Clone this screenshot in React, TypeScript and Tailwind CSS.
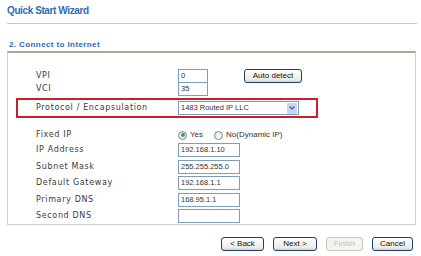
import { ChevronDown } from "lucide-react";

const label = "text-[8px] text-[#3a3a3a] tracking-[0.65px] [font-family:'DejaVu_Sans',sans-serif]";
const inputCls =
  "h-[14px] border border-[#7f9db9] bg-white px-[2px] text-[7.5px] leading-[12px] text-[#333] [font-family:'Liberation_Sans',Arial,sans-serif]";
const btnCls =
  "h-[14px] rounded-[3px] border border-[#1f3f6e] bg-[linear-gradient(#ffffff,#ecebe5_80%,#d6d0c5)] text-[8px] leading-[12px] text-[#111] [font-family:'Liberation_Sans',Arial,sans-serif]";

function Field({ value, w = "w-[62px]" }: { value: string; w?: string }) {
  return <div className={`${inputCls} ${w}`}>{value}</div>;
}

function Radio({ checked }: { checked?: boolean }) {
  return (
    <span className="inline-flex h-[9px] w-[9px] items-center justify-center rounded-full border border-[#6d8aa8] bg-[radial-gradient(circle_at_60%_60%,#ffffff,#dcdcd6)]">
      {checked && <span className="h-[4px] w-[4px] rounded-full bg-[#3aa63a]" />}
    </span>
  );
}

function Row({ name, children, cls = "" }: { name: string; children: React.ReactNode; cls?: string }) {
  return (
    <div className={`grid grid-cols-[142px_1fr] items-center ${cls}`}>
      <span className={label}>{name}</span>
      <div className="flex items-center">{children}</div>
    </div>
  );
}

export default function App() {
  return (
    <div className="h-[256px] w-[421px] overflow-hidden bg-white [font-family:'Liberation_Sans',Arial,sans-serif]">
      <div className="px-[7px] pt-[5px]">
        <h1 className="text-[10px] font-bold leading-[12px] tracking-[-0.4px] text-[#2f6cb3]">Quick Start Wizard</h1>
        <div className="mt-[6px] h-px w-[410px] bg-[#c9c9c0]" />
        <h2 className="ml-[2px] mt-[16px] text-[8px] font-bold leading-[10px] tracking-[0.4px] text-[#2a6db3]">
          2. Connect to Internet
        </h2>

        <div className="mt-px h-[174px] w-[409px] border border-[#d0d0c8] border-t-2 border-t-[#a9a99a] pl-[28px] pt-[16px]">
          <Row name="VPI" cls="h-[13px]">
            <Field value="0" w="w-[30px] h-[13px]" />
            <button className={`${btnCls} ml-[36px] w-[58px]`}>Auto detect</button>
          </Row>
          <Row name="VCI" cls="h-[13px]">
            <Field value="35" w="w-[30px] h-[13px]" />
          </Row>

          <div className="-ml-[20px] mt-[3px] flex h-[20px] w-[302px] items-center border-2 border-[#c8202a] pl-[18px]">
            <span className={`${label} w-[142px]`}>Protocol / Encapsulation</span>
            <div className="flex h-[14px] w-[121px] items-center justify-between border border-[#7f9db9] bg-white pl-[2px] pr-px">
              <span className="text-[7.5px] text-[#333]">1483 Routed IP LLC</span>
              <span className="flex h-[11px] w-[10px] items-center justify-center rounded-[1px] bg-[#c7d6f5]">
                <ChevronDown className="h-[8px] w-[8px] text-[#4d6185]" strokeWidth={4} />
              </span>
            </div>
          </div>

          <Row name="Fixed IP" cls="mt-[10px] h-[14px]">
            <div className="flex items-center gap-[3px] text-[8px] text-[#333]">
              <Radio checked />
              <span>Yes</span>
              <span className="ml-[5px]" />
              <Radio />
              <span>No(Dynamic IP)</span>
            </div>
          </Row>
          <Row name="IP Address" cls="mt-px h-[14px]">
            <Field value="192.168.1.10" />
          </Row>
          <Row name="Subnet Mask" cls="mt-[3px] h-[14px]">
            <Field value="255.255.255.0" />
          </Row>
          <Row name="Default Gateway" cls="mt-[2px] h-[14px]">
            <Field value="192.168.1.1" />
          </Row>
          <Row name="Primary DNS" cls="mt-[3px] h-[14px]">
            <Field value="168.95.1.1" />
          </Row>
          <Row name="Second DNS" cls="mt-[2px] h-[14px]">
            <Field value="" />
          </Row>
        </div>

        <div className="mt-[12px] flex justify-end gap-[9px] pr-[1px]">
          <button className={`${btnCls} w-[43px]`}>&lt; Back</button>
          <button className={`${btnCls} w-[44px]`}>Next &gt;</button>
          <button className="h-[14px] w-[37px] rounded-[3px] border border-[#c9c7ba] bg-[#f4f3ee] text-[8px] leading-[12px] text-[#c4c2b6]">
            Finish
          </button>
          <button className={`${btnCls} w-[41px]`}>Cancel</button>
        </div>
      </div>
    </div>
  );
}
